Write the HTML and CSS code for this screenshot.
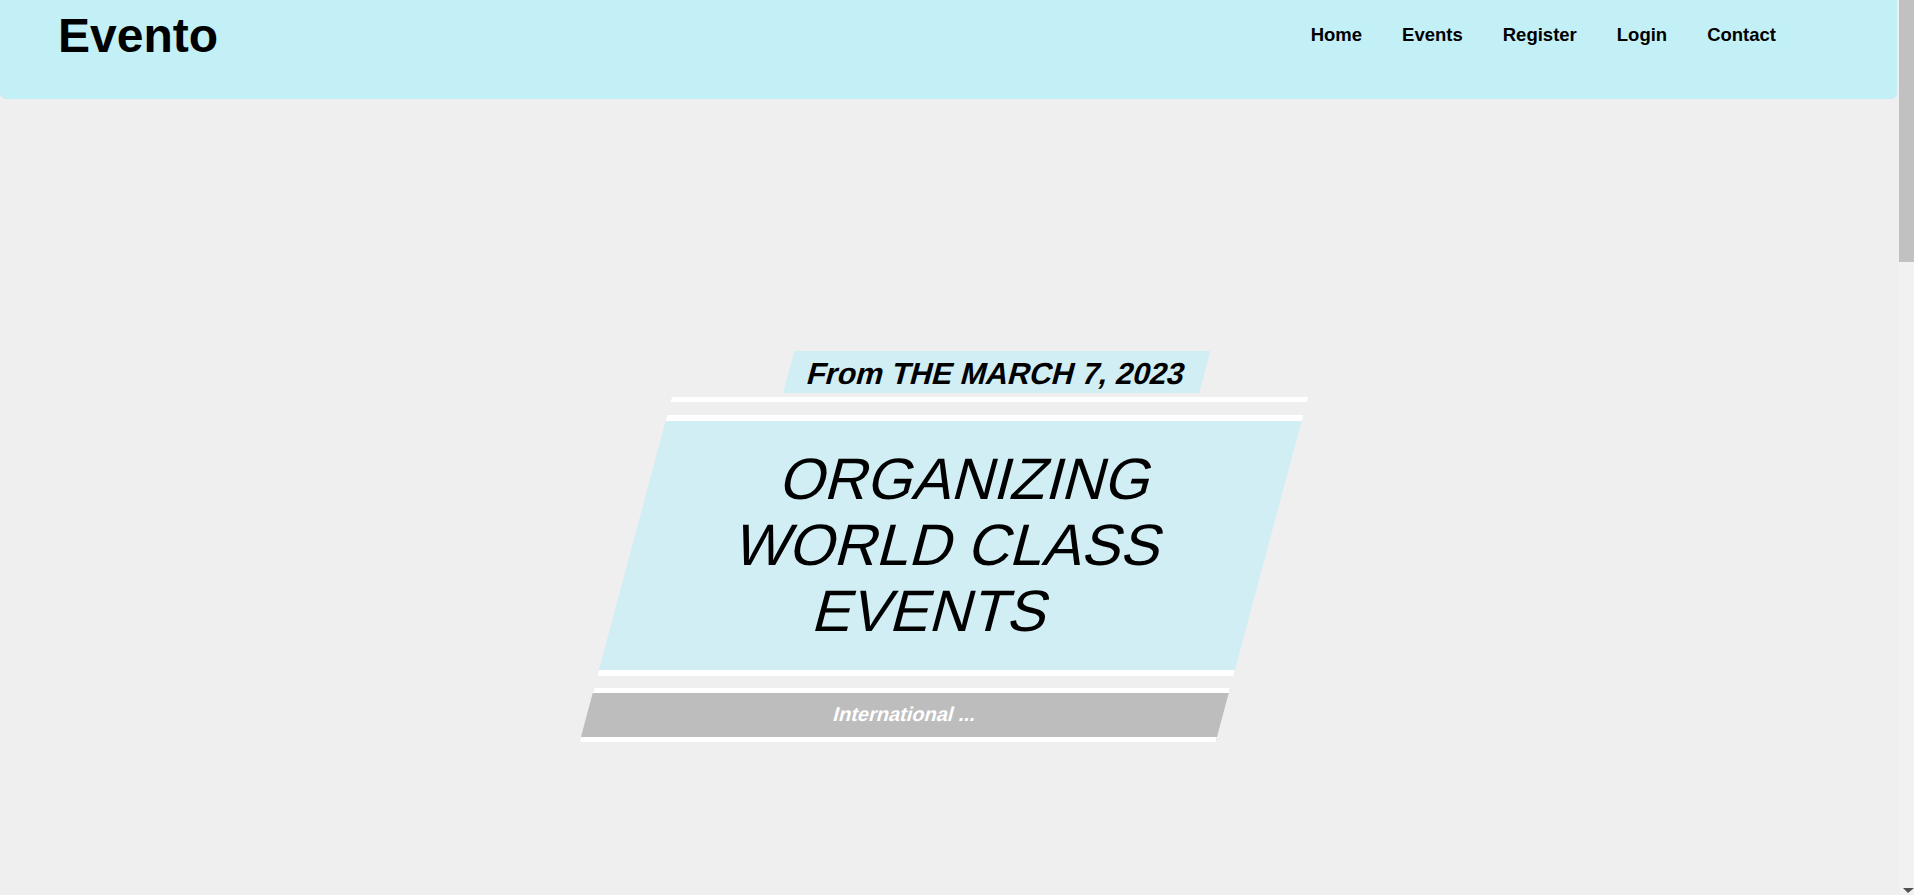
FILE: index.html
```html
<!DOCTYPE html>
<html lang="en">
<head>
<meta charset="utf-8">
<title>Evento</title>
<link rel="stylesheet" href="styles.css">
</head>
<body>
<div class="page">
  <header class="navbar">
    <div class="navbar-row">
      <div class="brand">Evento</div>
      <nav class="nav">
        <a href="#">Home</a>
        <a href="#">Events</a>
        <a href="#">Register</a>
        <a href="#">Login</a>
        <a href="#">Contact</a>
      </nav>
    </div>
  </header>
  <main>
    <section class="hero">
      <div class="banner">
        <div class="date-row"><span class="date-tag">From THE MARCH 7, 2023</span></div>
        <div class="rule"></div>
        <h1 class="title">ORGANIZING<br>WORLD CLASS<br>EVENTS</h1>
        <div class="subtitle">International ...</div>
      </div>
    </section>
    <section class="more"></section>
  </main>
</div>
<div class="scrollbar" aria-hidden="true">
  <div class="scrollbar-thumb"></div>
  <div class="scrollbar-track"></div>
  <div class="scrollbar-arrow"></div>
</div>
</body>
</html>
```
FILE: styles.css
```css
html, body {
  margin: 0;
  padding: 0;
}

body {
  height: 100vh;
  overflow: hidden;
  display: flex;
  background: #efefef;
  font-family: "Liberation Sans", Arial, sans-serif;
  color: #000;
}

.page {
  flex: 1;
  min-width: 0;
  height: 100vh;
  overflow-y: auto;
  scrollbar-width: none;
}

.page::-webkit-scrollbar {
  display: none;
}

.scrollbar {
  width: 15px;
  height: 100vh;
  flex: none;
  background: #f1f1f1;
  display: flex;
  flex-direction: column;
}

.scrollbar-thumb {
  height: 262px;
  background: #c1c1c1;
}

.scrollbar-track {
  flex: 1;
}

.scrollbar-arrow {
  width: 0;
  height: 0;
  margin: 0 0 2px 4px;
  border-left: 5px solid transparent;
  border-right: 6px solid transparent;
  border-top: 5px solid #505050;
}

.navbar {
  width: calc(100% - 2px);
  height: 99px;
  box-sizing: border-box;
  background: #c3eff6;
  border-radius: 0 0 6px 6px;
  padding: 0 121px 0 58px;
}

.navbar-row {
  height: 71px;
  display: flex;
  align-items: center;
  justify-content: space-between;
}

.brand {
  font-size: 48px;
  font-weight: bold;
  line-height: 1;
}

.nav {
  display: flex;
  gap: 40px;
}

.nav a {
  font-size: 18.5px;
  font-weight: bold;
  line-height: 1;
  color: #000;
  text-decoration: none;
}

.hero {
  height: 100vh;
  display: flex;
  align-items: center;
  justify-content: center;
}

.banner {
  width: 636px;
  transform: skewX(-15deg);
  display: flex;
  flex-direction: column;
}

.date-row {
  display: flex;
  justify-content: center;
  margin-bottom: 4px;
}

.date-tag {
  background: #d0eef4;
  font-size: 30.4px;
  font-weight: bold;
  line-height: 34px;
  padding: 5px 20px 3px;
}

.rule {
  height: 5px;
  background: #fff;
  margin-bottom: 13px;
}

.title {
  margin: 0 0 12px;
  background: #d0eef4;
  border-top: 6px solid #fff;
  border-bottom: 6px solid #fff;
  padding: 25px 0 26px;
  font-size: 58.5px;
  font-weight: normal;
  line-height: 66px;
  text-align: center;
}

.subtitle {
  background: #bdbdbd;
  border-top: 5px solid #fff;
  border-bottom: 5px solid #fff;
  padding: 10px 0 11px;
  color: #fff;
  font-size: 20px;
  font-weight: bold;
  line-height: 23px;
  text-align: center;
}

.more {
  height: 2010px;
}
```
